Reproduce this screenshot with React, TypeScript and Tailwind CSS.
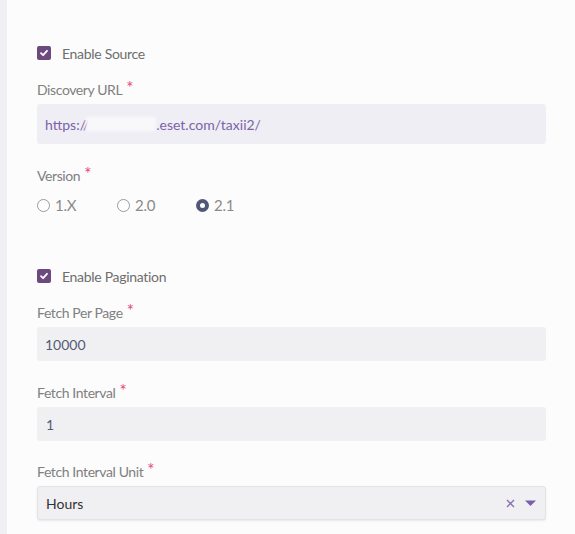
import React from "react";

const Req = () => (
  <span className="relative -top-[4px] ml-[4px] text-[17px] leading-none text-[#e8467c]">*</span>
);

const Label = ({ children, className = "" }: { children: React.ReactNode; className?: string }) => (
  <div className={`h-[20px] flex items-end text-[14px] leading-[20px] text-[#808080] tracking-[-0.4px] ${className}`}>
    <span>{children}</span>
    <Req />
  </div>
);

const Check = ({ label, className = "" }: { label: string; className?: string }) => (
  <div className={`h-[20px] flex items-center ${className}`}>
    <span className="w-[14px] h-[14px] rounded-[2px] bg-[#6c4a7f] flex items-center justify-center">
      <svg width="10" height="10" viewBox="0 0 10 10">
        <path d="M2 5.2 L4.1 7.2 L8 2.8" fill="none" stroke="white" strokeWidth="1.8" strokeLinecap="round" strokeLinejoin="round" />
      </svg>
    </span>
    <span className="ml-[11px] text-[14px] text-[#6e6e6e] tracking-[-0.3px]">{label}</span>
  </div>
);

const Radio = ({ label, checked, className = "" }: { label: string; checked?: boolean; className?: string }) => (
  <div className={`flex items-center ${className}`}>
    {checked ? (
      <span className="w-[13px] h-[13px] rounded-full bg-[#515779] flex items-center justify-center">
        <span className="w-[5px] h-[5px] rounded-full bg-white" />
      </span>
    ) : (
      <span className="w-[13px] h-[13px] rounded-full border-[1.5px] border-[#9a9a9a] bg-white" />
    )}
    <span className="ml-[5px] text-[15px] text-[#8a8a8a] tracking-[-0.2px]">{label}</span>
  </div>
);

export default function App() {
  return (
    <div
      className="w-[575px] h-[534px] bg-[#fcfcfc] flex overflow-hidden"
      style={{ fontFamily: "Lato, 'Noto Sans', sans-serif" }}
    >
      <div className="w-[7px] shrink-0 bg-[#efeff4]" />
      <div className="flex-1 pl-[30px] pr-[29px] pt-[43px] flex flex-col">
        <Check label="Enable Source" />
        <Label className="mt-[17px]">Discovery URL</Label>
        <div className="mt-[4px] h-[40px] rounded-[3px] bg-[#efeef5] flex items-center pl-[8px] text-[14px] text-[#7b63a9]">
          <span>https://</span>
          <span className="relative inline-block -ml-[3px] w-[70px] h-[14px] bg-[#f8f8fb] blur-[1.5px]" />
          <span>.eset.com/taxii2/</span>
        </div>
        <Label className="mt-[22px]">Version</Label>
        <div className="mt-[9px] h-[20px] flex items-center">
          <Radio label="1.X" className="w-[80px]" />
          <Radio label="2.0" className="w-[79px]" />
          <Radio label="2.1" checked />
        </div>
        <Check label="Enable Pagination" className="mt-[51px]" />
        <Label className="mt-[17px]">Fetch Per Page</Label>
        <div className="mt-[4px] h-[34px] rounded-[3px] bg-[#f0f0f3] flex items-center pl-[8px] text-[14px] text-[#555b75]">
          10000
        </div>
        <Label className="mt-[22px]">Fetch Interval</Label>
        <div className="mt-[4px] h-[34px] rounded-[3px] bg-[#f0f0f3] flex items-center pl-[9px] text-[14px] text-[#555b75]">
          1
        </div>
        <Label className="mt-[21px]">Fetch Interval Unit</Label>
        <div className="mt-[4px] h-[34px] rounded-[3px] bg-[#f0f0f3] border border-[#e3e3e7] shadow-[0_1px_2px_rgba(0,0,0,0.08)] flex items-center pl-[8px] pr-[9px] text-[14px] text-[#333]">
          <span className="flex-1">Hours</span>
          <svg width="9" height="9" viewBox="0 0 9 9" className="mr-[10px]">
            <path d="M1 1 L8 8 M8 1 L1 8" stroke="#8872b5" strokeWidth="1.4" />
          </svg>
          <svg width="11" height="7" viewBox="0 0 11 7">
            <path d="M0 0.5 L11 0.5 L5.5 6 Z" fill="#7a60a9" />
          </svg>
        </div>
      </div>
    </div>
  );
}
